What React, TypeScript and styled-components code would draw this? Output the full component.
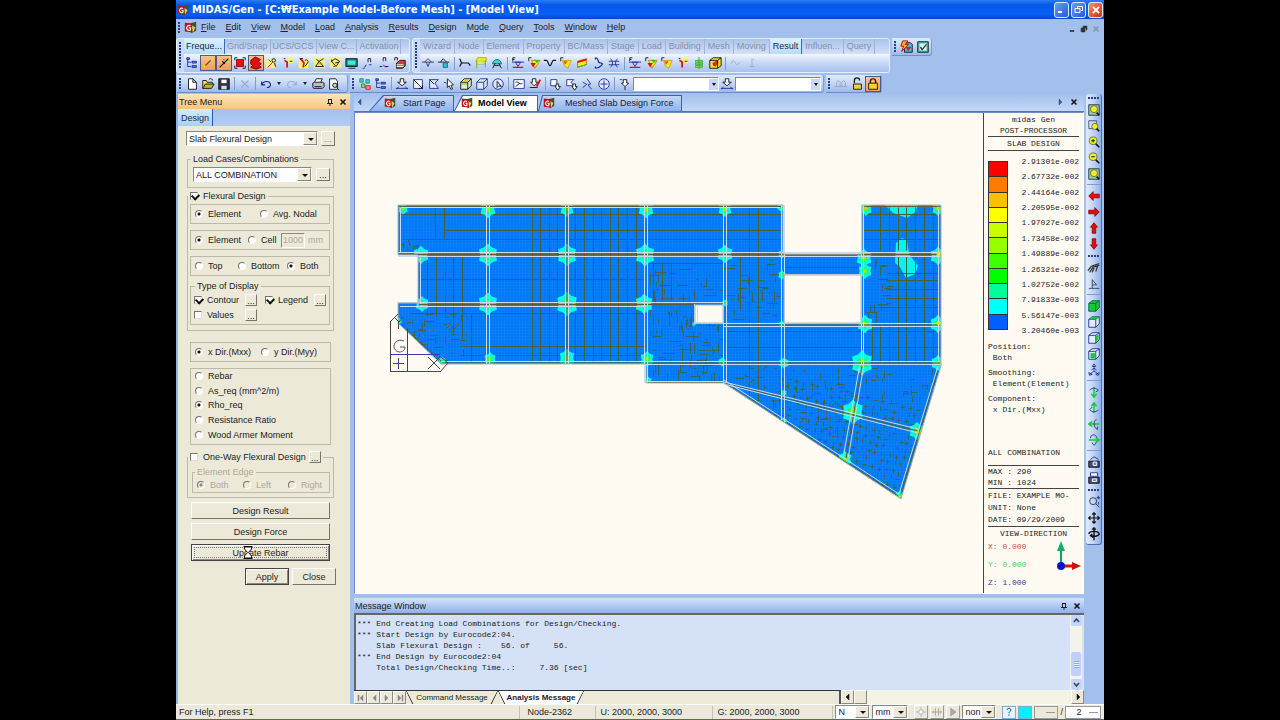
import React from "react";
import styled, { createGlobalStyle, css } from "styled-components";

const UI = `"Liberation Sans", Arial, sans-serif`;
const MONO = `"Liberation Mono", "Courier New", monospace`;

const GlobalStyle = createGlobalStyle`
  * { box-sizing: border-box; }
  body { margin: 0; background: #000; font-family: ${UI}; font-size: 9px; color: #222; }
  button, select, input { font: inherit; color: inherit; margin: 0; }
`;

/* ---------- icons ---------- */

type Stroke = [d: string, stroke: string, fill?: string, width?: number];

const K = "#111";
const B = "#1a2a9a";
const R = "#e01010";
const Y = "#f4f020";
const G = "#18c838";

const ICONS: Record<string, Stroke[]> = {
  tree: [["M3 3v9M3 7h4M3 12h4", B], ["M2 2h3v2h-3zM8 6h5v2h-5zM8 11h5v2h-5z", B, "#6a86d8"]],
  line: [["M3 13L13 3", "#5a4a10", undefined, 1.5], ["M3 13l2-2M11 5l2-2", Y, undefined, 2]],
  lineY: [["M3 13L13 3M6 6l3 3", K, undefined, 1.5], ["M7 5l2-2", R]],
  redBox: [["M2 2h3M11 2h3M2 14h3M11 14h3M2 2v3M14 2v3M2 11v3M14 11v3", K], ["M4 4h8v8H4z", "#a00", R]],
  redBlob: [["M2 5l5-4 6 3-2 2 3 3-2 2 2 2-6 2-6-2 2-2-2-2z", "#700", "#e01010"]],
  nodeY: [["M1 4h10v10H1z", "none", "#f6f27a"], ["M3 13l6-6M4 4l3 3", R], ["M10 3a2 2 0 1 1 0 4a2 2 0 1 1 0-4M11 8l1 4", K]],
  nodeR: [["M7 2h7v6H7z", "none", "#f6f27a"], ["M7 6v7M4 5l3 2", R, undefined, 2], ["M10 6h3M3 3h2", K]],
  nodeF: [["M2 4h11v10H2z", "none", "#f6f27a"], ["M4 3l4 5-1 5", R, undefined, 2], ["M9 5a2 2 0 1 1 3 3l-3 4M3 3h4", K]],
  mesh: [["M1 2h13v12H1z", "none", "#f2ee80"], ["M3 12l4-6 5 6zM4 4l3 2 5-3", K], ["M6 9h5", "#b08020"]],
  mesh2: [["M1 2h13v12H1z", "none", "#f2ee80"], ["M3 6l4-3 5 3-4 6zM7 8l4-1M3 4v3", K], ["M5 12h2", R]],
  screen: [["M1 3h13v9H1z", K, "#1c8070"], ["M3 5h9v5H3z", "none", "#40e8e0"], ["M4 14h8", K]],
  num: [["M8 7V3h3v4M4 13l2-3", K], ["M2 14h2M9 10h3", B]],
  num2: [["M7 6V2h3v4M3 12h3M9 12h4", K], ["M7 10l3 3", B]],
  book: [["M2 5V2h3v3", K], ["M4 8l4-3h6v6l-3 3H4z", K, "#d04030"], ["M4 10h8M4 12h8", "#fff"]],
  beam: [["M1 7h14M4 7l4-4 4 4M6 7l2 5 2-5", "#335"]],
  beam2: [["M1 7h13M4 7l3-4 4 4", K], ["M7 8h5v5H7z", "#178", "#30b8d8"]],
  ibeam: [["M2 3l2 5h8l2 3M2 12l2-4", K, undefined, 1.4]],
  frame: [["M4 2h10v4H2z", "#aa0", Y], ["M3 6v8M13 5v8M3 9h10", "#6a3", "none"], ["M4 6h7v3H4z", "none", "#d8f060"]],
  dome: [["M3 9a5 5 0 0 1 10 0z", "#167", "#40d8c0"], ["M3 14l3-6M13 14l-3-6M5 11h6", K]],
  fsup: [["M2 6V2h3M2 4h2", K], ["M1 7h14M5 7l3 5 3-5z", B], ["M2 13h12", R, undefined, 1.5]],
  fcont: [["M2 6V2h3", K], ["M5 5h10l-6 9-2-5z", "#d08000", Y], ["M8 4l6 1-3 3z", "none", G], ["M4 8l6 0-3 5z", "none", R]],
  curve: [["M1 5h3c2 0 2 6 4 6s2-6 4-6h3", K, undefined, 1.3]],
  fblob: [["M2 6V2h3", K], ["M4 5h10l-4 9-4-3z", "#d0a000", Y], ["M5 6h5l-3 4z", "none", "#f05020"]],
  slab: [["M3 6l10-3v7L3 13z", "#c60", Y], ["M3 6l10-3v2L3 8z", "none", R], ["M3 12l10-3v1L3 13z", "none", G]],
  hook: [["M5 2c5 0 1 6 6 6s-1 6-6 6M5 2v2M5 12v2", B, undefined, 1.4]],
  lattice: [["M4 3c3 3 3 7 0 10M12 3c-3 3-3 7 0 10M2 6h12M2 10h12", B]],
  coil: [["M4 5h8v2H4zM4 8h8v2H4zM4 11h8v2H4z", "#3a3", "#9be86a"], ["M8 1v14", "#3a3"]],
  cube3: [["M2 5l4-3h9v9l-4 3H2z", K, "#f4e030"], ["M5 8l5-3 2 2-3 5-3-1z", "none", "#d03010"], ["M2 5h9v9M11 5l4-3", K]],
  ghost: [["M2 9l3-4 4 5 4-3", "#9aa8c8"]],
  ghost2: [["M8 3v9M5 12h6M9 3l2 2", "#9aa8c8"]],
  blank: [["M4 2h5l4 4v8H4zM9 2v4h4", K, "#fff"]],
  open: [["M2 13V4h4l1 2h6v2", K, "#f2e070"], ["M2 13l3-5h10l-3 5z", K, "#c8b020"], ["M9 3c2-2 4-1 4 1", K]],
  save: [["M2 2h12v12H2z", K, "#334"], ["M5 3h6v4H5z", "none", "#fff"], ["M5 10h6v4H5z", "none", "#cde"]],
  cut: [["M4 4l8 8M12 4l-8 8", "#9aa6c4", undefined, 1.3]],
  undo: [["M3 5v4h4M3 9c2-5 9-5 10-1 1 3-2 4-4 4", B, undefined, 1.3]],
  redo: [["M13 5v4H9M13 9C11 4 4 4 3 8c-1 3 2 4 4 4", "#9fb0d8", undefined, 1.3]],
  print: [["M4 6l2-4h7l-2 4", K, "#fff"], ["M2 7l2-1h9l2 1v4l-2 2H3l-1-2z", K, "#b8bcc8"], ["M4 11h8", K]],
  preview: [["M3 2h7l2 3v9H3z", K, "#fff"], ["M9 7a2.500 2.500 0 1 1 0 5a2.500 2.500 0 1 1 0-5M11 12l3 3", K, "#9fe0e8"]],
  multi: [["M2 2h4v4H2zM9 3h4v4H9z", "#2a8a90", "#50c8c0"], ["M4 8h4v4H4z", "#2a8a40", "#70e070"], ["M9 10h5v4H9z", R, "#f09090"]],
  arrowDn: [["M6 2h4v4h3l-5 4-5-4h3z", K, "#fff"], ["M1 13h14M4 11l-2 3M12 11l2 3", B]],
  selWin: [["M3 3h10v10H3z", B, "#fff"], ["M3 3l10 10M13 9v4H9", K]],
  selPoly: [["M3 3h10l-4 4 4 6H3z", B, "#dfe8ff"], ["M3 3l5 5", K]],
  cursor: [["M5 2l7 7-3 .5 2 4-2 .5-2-4-2 2z", K, "#fff"], ["M1 6l3 1", B]],
  cube: [["M2 6l4-4h8v8l-4 4H2zM2 6h8v8M10 6l4-4", K, "#e8ecc0"], ["M3 8h6", G], ["M6 4h4", "#e8c020", undefined, 2]],
  cubeB: [["M2 6l4-4h8v8l-4 4H2zM2 6h8v8M10 6l4-4", B, "#dfe8ff"]],
  circleCur: [["M8 2a6 6 0 1 1 0 12a6 6 0 1 1 0-12", B, "#dfe8ff"], ["M7 5v7l2-2 3 1z", K, "#fff"]],
  prev: [["M2 3h12v10H2z", B, "#fff"], ["M4 6c3-2 5 4 8 1M4 11l5-4", K]],
  pen: [["M5 2h4v4h3l-5 4-4-4h2zM2 12h9", K, "#fff"], ["M14 3l-4 8", R, undefined, 2]],
  actWin: [["M2 3h7v7H2z", B, "#fff"], ["M8 8h3v3h2l-3 4-3-4h1z", K, "#fff"]],
  actPoly: [["M2 3h8l-3 3 3 4H2z", B, "#fff"], ["M9 8h3v3h2l-3 4-3-4h1z", K, "#fff"]],
  walk: [["M7 2l4 6-3 1 4 5M2 12l5-4M2 6l4 2", B]],
  target: [["M8 2a6 6 0 1 1 0 12a6 6 0 1 1 0-12M8 4v9M4 8h8", B, "#dfe8ff"]],
  pin: [["M6 3h4v4h2l-4 4-4-4h2zM8 11v4", K, "#fff"], ["M2 3h3", B]],
  lockOpen: [["M5 7V4a3 3 0 0 1 6 0", K, undefined, 1.4], ["M4 8h9v6H4z", K, "#f0d040"]],
  lock: [["M5 7V5a3 3 0 0 1 6 0v2", K, undefined, 1.4], ["M3 7h10v7H3z", K, "#f0d820"]],
  bridge: [["M1 11h14M3 11V6l2-2 2 2v5M9 11V6l2-2 2 2v5", "#98a4bc"]],
  flashDoc: [["M6 3h6l2 2v9H5z", K, "#48b8e0"], ["M7 8h6l-4 5z", "none", "#d02020"], ["M3 1h6l-3 4h4l-8 8 2-6H1z", "#a00", "#ffb020"]],
  check: [["M2 2h12v12H2z", K, "#38c8c0"], ["M4 4h8v8H4z", "none", "#c8fff4"], ["M5 8l2 3 5-6", "#702020", undefined, 1.6]],
  zoomFit: [["M2 2h12v12H2z", "#234", "#9cc8a0"], ["M8 3a4 4 0 1 1 0 8a4 4 0 1 1 0-8", "#665", Y], ["M11 11l3 3", K, undefined, 2]],
  zoomWin: [["M2 2h9v9H2z", "#456", "none"], ["M9 5a3.500 3.500 0 1 1 0 7a3.500 3.500 0 1 1 0-7", "#665", Y], ["M11 11l3 3", K, undefined, 2]],
  zoomIn: [["M7 2a4.500 4.500 0 1 1 0 9a4.500 4.500 0 1 1 0-9", "#665", Y], ["M5 6.500h4M7 4.500v4", "#0a5020", undefined, 1.4], ["M10 10l4 4", K, undefined, 2]],
  zoomOut: [["M7 2a4.500 4.500 0 1 1 0 9a4.500 4.500 0 1 1 0-9", "#665", Y], ["M5 6.500h4", "#0a5020", undefined, 1.4], ["M10 10l4 4", K, undefined, 2]],
  left: [["M2 8l5-5v3h7v4H7v3z", "#900", R]],
  right: [["M14 8L9 3v3H2v4h7v3z", "#900", R]],
  up: [["M8 2l4 5h-2v7H6V7H4z", "#900", R]],
  down: [["M8 14l4-5h-2V2H6v7H4z", "#900", R]],
  render: [["M1 11l4-5 9-3M3 13l4-6 7-2M6 13l2-5M10 12l2-6", "#333", undefined, 1.4]],
  persp: [["M2 13h12M6 13V3l5 6H6", "#345"]],
  boxFull: [["M2 5l4-3h8v8l-4 4H2z", "#064", G], ["M2 5h8v9M10 5l4-3", "#064"]],
  boxTop: [["M2 5l4-3h8v8l-4 4H2zM2 5h8v9M10 5l4-3", B, "#e4ecff"], ["M6 2h8l-4 3H2z", "none", G]],
  boxRight: [["M2 5l4-3h8v8l-4 4H2zM2 5h8v9M10 5l4-3", B, "#e4ecff"], ["M10 6l3-2v6l-3 3z", "none", G]],
  boxFront: [["M2 5l4-3h8v8l-4 4H2zM2 5h8v9M10 5l4-3", B, "#e4ecff"], ["M4 7h6v6H4z", "none", G]],
  iso: [["M8 3v6l-5 4M8 9l5 4M6 4l2-3 2 3zM2 11l1 3 3-1zM14 11l-1 3-3-1zM5 8l3-2 3 2", B, "#dfe8ff"]],
  rotD: [["M8 2v11M5 10l3 4 3-4", G, undefined, 1.6], ["M3 6c2-3 8-3 10 0l-3 2", B]],
  rotU: [["M8 14V3M5 6l3-4 3 4", G, undefined, 1.6], ["M3 10c2 3 8 3 10 0M3 10l3-3", B]],
  rotL: [["M14 8H3M6 5L2 8l4 3", G, undefined, 1.6], ["M11 3c-4 0-4 10 1 11M12 11v3", B]],
  rotR: [["M2 8h11M10 5l4 3-4 3", G, undefined, 1.6], ["M4 6c0-5 6-5 7-1M6 11c1 4 4 3 4 0", B]],
  cam: [["M2 7h12v7H2z", K, "#405080"], ["M7 8h4v4H7z", "#fff", "#88a"], ["M4 5l4-3 5 3", B]],
  cam2: [["M2 7h12v7H2z", K, "#405080"], ["M4 2h8v4H4z", B, "#fff"], ["M6 9h5v3H6z", "#fff", "#88a"]],
  dynZoom: [["M7 3a4 4 0 1 1 0 8a4 4 0 1 1 0-8M10 10l4 4", "#234"], ["M11 3h4M13 1v4M13 8v3", B]],
  move: [["M8 2v12M2 8h12M6 4l2-2 2 2M6 12l2 2 2-2M4 6L2 8l2 2M12 6l2 2-2 2", K, undefined, 1.4]],
  spin: [["M8 1v14M6 3l2-2 2 2", K, undefined, 1.6], ["M2 8c1-4 11-4 12 0-1 3-7 3-9 2M6 8l-2 2 3 2", K, undefined, 1.6]],
  gear: [["M8 5a3 3 0 1 1 0 6a3 3 0 1 1 0-6M8 2v2M8 12v2M2 8h2M12 8h2", "#999", "#fff"]],
  shift: [["M2 8h12M4 6L2 8l2 2M12 6l2 2-2 2M6 3v10M10 3v10", "#999"]],
  play: [["M5 3l7 5-7 5z", "#999", "#aaa"]],
  help: [["M5 5c0-4 6-4 6 0 0 2-3 2-3 5M8 12v2", "#23a", undefined, 1.6]],
};

const Glyph = styled.svg`
  display: block;
  flex: none;
`;

const Icon = ({ name, size = 14 }: { name: string; size?: number }) => (
  <Glyph width={size} height={size} viewBox="0 0 16 16" aria-hidden="true">
    {ICONS[name].map(([d, stroke, fill, w], i) => (
      <path key={i} d={d} stroke={stroke} fill={fill ?? "none"} strokeWidth={w ?? 1} />
    ))}
  </Glyph>
);

const AppIcon = ({ size = 13 }: { size?: number }) => (
  <Glyph width={size} height={size} viewBox="0 0 16 16" aria-hidden="true">
    <path d="M7 3l8-2v11l-6 3z" fill="#46502a" />
    <path d="M9 5l5 3-3 6z" fill="#d8d070" />
    <path d="M1 2l9 1v11l-9-1z" fill="#b81414" />
    <path d="M8 6a3 3 0 1 0 0 5V8.500H6" fill="none" stroke="#fff" strokeWidth="1.500" />
  </Glyph>
);

/* ---------- window frame ---------- */

const Desktop = styled.div`
  min-height: 100vh;
  padding: 0 176px;
  display: flex;
`;

const Window = styled.div`
  flex: 1;
  min-width: 0;
  display: flex;
  flex-direction: column;
  background: #a3c0ec;
  overflow: hidden;
`;

const TitleBar = styled.header`
  height: 19px;
  flex: none;
  display: flex;
  align-items: center;
  gap: 3px;
  padding: 0 1px 0 1px;
  background: linear-gradient(#2b7df5 0, #0558e8 25%, #0560f4 75%, #0448c8 100%);
`;

const Title = styled.h1`
  flex: 1;
  margin: 0;
  color: #fff;
  font-family: "DejaVu Sans Condensed", "DejaVu Sans", sans-serif;
  font-size: 11px;
  line-height: 18px;
  font-weight: bold;
  white-space: nowrap;
`;

const CaptionButtons = styled.div`
  display: flex;
  gap: 2px;
`;

const CaptionButton = styled.button<{ $close?: boolean }>`
  width: 15px;
  height: 16px;
  padding: 0;
  display: grid;
  place-items: center;
  border: 1px solid #dfe8ff;
  border-radius: 3px;
  background: ${(p) => (p.$close ? "linear-gradient(135deg, #f09070, #c83010)" : "linear-gradient(135deg, #6f9cf4, #2458d0)")};
`;

const MenuBar = styled.nav`
  height: 18px;
  flex: none;
  display: flex;
  align-items: center;
  padding: 0 4px 2px 0;
  gap: 1px;
`;

const MenuItems = styled.div`
  flex: 1;
  display: flex;
  gap: 10px;
  padding-left: 3px;
`;

const MenuItem = styled.a`
  color: #222;
  text-decoration: none;
  line-height: 14px;
`;

const Mnemonic = styled.u`
  text-underline-offset: 1px;
`;

const MdiButtons = styled.div`
  display: flex;
  gap: 4px;
  padding-top: 4px;
`;

const PlainButton = styled.button`
  display: grid;
  place-items: center;
  padding: 0;
  border: 0;
  background: none;
`;

const Grip = styled.span<{ $h?: number; $across?: boolean }>`
  flex: none;
  ${(p) =>
    p.$across
      ? css`
          width: 11px;
          height: 2px;
          margin: 3px auto;
          background: repeating-linear-gradient(90deg, #26408c 0 2px, transparent 2px 3px);
        `
      : css`
          width: 2px;
          height: ${p.$h ?? 12}px;
          margin: 0 3px 0 2px;
          background: repeating-linear-gradient(#26408c 0 2px, transparent 2px 3px);
        `}
`;

const RibbonRow = styled.div`
  display: flex;
  align-items: flex-start;
  flex: none;
  gap: 2px;
  padding: 1px 0 0 0;
  height: 38px;
`;

const bar = css`
  background: linear-gradient(#dfe9fb, #c4d6f6 50%, #9cb8ea);
  border-bottom: 1px solid #6d8dc8;
  border-right: 1px solid #7f9cd0;
  border-radius: 0 3px 3px 0;
`;

const Ribbon = styled.section<{ $w: number }>`
  flex: 0 1 ${(p) => p.$w}px;
  height: 35px;
  display: flex;
  align-items: center;
  background: #c9daf7;
  border: 1px solid #e6eefc;
  border-radius: 3px;
  overflow: hidden;
`;

const RibbonBody = styled.div`
  flex: 1;
  min-width: 0;
`;

const RibbonTabs = styled.div<{ $pad: number }>`
  display: flex;
  height: 15px;
  background: linear-gradient(#a9c2ee, #d4e1f8);
  & > button { padding: 0 ${(p) => p.$pad}px; }
`;

const RibbonTab = styled.button<{ $on?: boolean }>`
  height: 15px;
  border: 0;
  border-right: 1px solid #9fb2d8;
  background: none;
  color: #8490ab;
  white-space: nowrap;
  line-height: 13px;
  ${(p) =>
    p.$on &&
    css`
      background: linear-gradient(#d8f0fc, #b8dcf8);
      border-right-color: #3a68b8;
      color: #1c2c50;
    `}
`;

const IconRow = styled.div`
  display: flex;
  align-items: center;
  height: 18px;
  background: linear-gradient(#f2f6fe, #c0d3f5 60%, #a8c2f0);
`;

const ToolButton = styled.button<{ $on?: boolean }>`
  width: 16px;
  height: 16px;
  flex: none;
  display: grid;
  place-items: center;
  padding: 0;
  border: 1px solid ${(p) => (p.$on ? "#4a5a90" : "transparent")};
  background: ${(p) => (p.$on ? "linear-gradient(#fbc48c, #f49c54)" : "none")};
`;

const Divider = styled.span<{ $across?: boolean }>`
  flex: none;
  background: #7f9bd0;
  ${(p) => (p.$across ? "width: 14px; height: 1px; margin: 2px auto 3px;" : "width: 1px; height: 13px; margin: 0 2px;")}
`;

const ToolRow = styled.div`
  display: flex;
  flex: none;
  gap: 2px;
  padding-left: 1px;
  height: 19px;
`;

const ToolStrip = styled.section<{ $w?: number }>`
  display: flex;
  align-items: center;
  height: 18px;
  ${(p) => p.$w && `width: ${p.$w}px;`}
  ${bar}
`;

const Caret = styled.span`
  flex: none;
  width: 0;
  height: 0;
  margin: 0 3px;
  border: 2px solid transparent;
  border-top: 3px solid #223;
  border-bottom: 0;
`;

/* ---------- form controls ---------- */

const SelectFrame = styled.span<{ $w: number; $h?: number; $flat?: boolean }>`
  position: relative;
  display: block;
  flex: none;
  width: ${(p) => p.$w}px;
  height: ${(p) => p.$h ?? 15}px;
  &::after {
    content: "";
    position: absolute;
    z-index: 1;
    right: 4px;
    top: calc(50% - 1px);
    border: 3px solid transparent;
    border-top: 3px solid #111;
    border-bottom: 0;
    pointer-events: none;
    ${(p) => p.$flat && "border-width: 3px 2px 0; right: 3px;"}
  }
  &::before {
    content: "";
    position: absolute;
    right: 1px;
    top: 1px;
    bottom: 1px;
    width: 12px;
    pointer-events: none;
    background: ${(p) => (p.$flat ? "#c8d8f6" : "#ece9d8")};
    border: 1px solid ${(p) => (p.$flat ? "#c8d8f6" : "#8a887c")};
    border-left-color: #fff;
    border-top-color: #fff;
    ${(p) => p.$flat && "width: 8px;"}
  }
`;

const SelectBox = styled.select`
  appearance: none;
  width: 100%;
  height: 100%;
  padding: 0 12px 0 2px;
  border: 1px solid #8a887c;
  border-right-color: #fff;
  border-bottom-color: #fff;
  border-radius: 0;
  background: #fff;
  color: #222;
`;

const Select = (p: { label: string; value: string; w: number; h?: number; flat?: boolean }) => (
  <SelectFrame $w={p.w} $h={p.h} $flat={p.flat}>
    <SelectBox aria-label={p.label}>
      <option>{p.value}</option>
    </SelectBox>
  </SelectFrame>
);

const Push = styled.button<{ $w?: number; $h?: number; $strong?: boolean }>`
  position: relative;
  width: ${(p) => (p.$w ? `${p.$w}px` : "100%")};
  height: ${(p) => p.$h ?? 17}px;
  flex: none;
  padding: 0;
  border: 1px solid #fff;
  border-right-color: #77756a;
  border-bottom-color: #77756a;
  background: #ece9d8;
  line-height: 12px;
  ${(p) =>
    p.$strong &&
    css`
      border-color: #444;
      box-shadow: inset 1px 1px #fff, inset -1px -1px #8a887c;
    `}
  &:disabled { color: #8a887c; }
`;

const Focus = styled.span`
  position: absolute;
  inset: 2px;
  border: 1px dotted #777;
`;

const Hourglass = styled.svg`
  position: absolute;
  left: 50px;
  top: 0;
`;

const Choice = styled.label<{ $w?: number; $off?: boolean }>`
  display: flex;
  align-items: center;
  gap: 5px;
  flex: none;
  ${(p) => p.$w && `width: ${p.$w}px;`}
  line-height: 12px;
  white-space: nowrap;
  color: ${(p) => (p.$off ? "#aca899" : "#222")};
`;

const Radio = styled.input`
  appearance: none;
  width: 8px;
  height: 8px;
  flex: none;
  border: 1px solid #77756a;
  border-right-color: #fff;
  border-bottom-color: #fff;
  border-radius: 50%;
  background: #fff;
  &:checked { background: radial-gradient(circle, #111 0 1px, #fff 2px); }
  &:disabled { background: #ece9d8; }
  &:disabled:checked { background: radial-gradient(circle, #888 0 1px, #ece9d8 2px); }
`;

const Tick = styled.input`
  appearance: none;
  width: 8px;
  height: 8px;
  flex: none;
  border: 1px solid #77756a;
  border-right-color: #ddd;
  border-bottom-color: #ddd;
  background: #fff;
  position: relative;
  &:checked::after {
    content: "";
    position: absolute;
    left: 1px;
    top: 0;
    width: 5px;
    height: 4px;
    border: solid #111;
    border-width: 0 0 2px 2px;
    transform: rotate(-45deg);
  }
`;

const Opt = (p: { name: string; label: string; on?: boolean; w?: number; off?: boolean }) => (
  <Choice $w={p.w} $off={p.off}>
    <Radio type="radio" name={p.name} defaultChecked={p.on} disabled={p.off} />
    {p.label}
  </Choice>
);

const Check = (p: { label: string; on?: boolean; w?: number }) => (
  <Choice $w={p.w}>
    <Tick type="checkbox" defaultChecked={p.on} />
    {p.label}
  </Choice>
);

/* ---------- left panel ---------- */

const Main = styled.main`
  flex: 1;
  min-height: 0;
  display: flex;
`;

const TreeMenu = styled.aside`
  width: 174px;
  flex: none;
  display: flex;
  flex-direction: column;
  border-left: 2px solid #8fb0e8;
`;

const PanelHead = styled.div`
  height: 15px;
  flex: none;
  display: flex;
  align-items: center;
  gap: 5px;
  padding: 0 3px 0 1px;
  background: linear-gradient(#fde4b8, #f5c67c);
  color: #222;
`;

const HeadTitle = styled.span`
  flex: 1;
`;

const DesignTabRow = styled.div`
  height: 17px;
  flex: none;
  background: linear-gradient(#a3c0ec, #b4ccf2);
`;

const DesignTab = styled.button`
  height: 17px;
  width: 35px;
  padding: 0;
  border: 0;
  border-right: 1px solid #2a5ab0;
  background: linear-gradient(#d4ecfc, #a8d0f4);
  color: #1c2c50;
`;

const PanelBody = styled.form`
  flex: 1;
  padding: 5px 16px 0 8px;
  background: #ece9d8;
  display: flex;
  flex-direction: column;
`;

const TopRow = styled.div`
  display: flex;
  gap: 3px;
  margin-bottom: 7px;
  margin-right: -2px;
`;

const Group = styled.fieldset<{ $pad?: string; $mt?: number; $off?: boolean }>`
  margin: ${(p) => p.$mt ?? 0}px 0 0 1px;
  padding: ${(p) => p.$pad ?? "2px 3px 5px"};
  min-width: 0;
  border: 1px solid #bcb9aa;
  color: ${(p) => (p.$off ? "#aca899" : "inherit")};
`;

const GroupTitle = styled.legend<{ $h?: number; $ml?: number }>`
  display: flex;
  align-items: center;
  gap: 3px;
  height: ${(p) => p.$h ?? 12}px;
  line-height: ${(p) => p.$h ?? 12}px;
  margin-left: ${(p) => p.$ml ?? 0}px;
  padding: 0 2px;
`;

const Stack = styled.div`
  display: flex;
  flex-direction: column;
  gap: 6px;
  & > * { margin-left: -1px; }
  & > fieldset { margin-top: -1px; }
`;

const Box = styled.div`
  display: flex;
  align-items: center;
  height: 20px;
  padding-left: 4px;
  border: 1px solid #bcb9aa;
`;

const OptionList = styled.div`
  display: grid;
  grid-auto-rows: 1fr;
  align-items: center;
  height: 77px;
  margin: 6px 3px 0 4px;
  padding: 0 0 2px 4px;
  border: 1px solid #bcb9aa;
`;

const DirBox = styled(Box)`
  margin: 11px 3px 0 4px;
`;

const Line = styled.div`
  display: flex;
  align-items: center;
  height: 15px;
`;

const CellSize = styled.input`
  width: 24px;
  height: 15px;
  margin: 0 3px 0 0;
  padding: 0 1px;
  border: 1px solid #8a887c;
  border-right-color: #fff;
  border-bottom-color: #fff;
  background: #ece9d8;
  color: #aca899;
`;

const Actions = styled.div`
  display: flex;
  flex-direction: column;
  gap: 4px;
  margin: 4px 4px 7px 5px;
`;

const Confirm = styled.div`
  display: flex;
  justify-content: flex-end;
  gap: 3px;
  margin-right: -2px;
`;

/* ---------- documents ---------- */

const Center = styled.div`
  flex: 1;
  min-width: 0;
  display: flex;
  flex-direction: column;
  margin-left: 4px;
`;

const DocTabs = styled.div`
  height: 18px;
  flex: none;
  display: flex;
  align-items: flex-end;
  border-bottom: 1px solid #4f74b8;
  background: linear-gradient(#a3c0ec, #c4d7f6);
`;

const DocControls = styled.div<{ $end?: boolean }>`
  display: flex;
  align-items: center;
  gap: 5px;
  height: 17px;
  padding: ${(p) => (p.$end ? "0 6px 1px 0" : "0 5px 1px 2px")};
`;

const DocTab = styled.button<{ $on?: boolean; $w: number; $pad: number; $cut: number; $gap?: number }>`
  position: relative;
  width: ${(p) => p.$w}px;
  height: 16px;
  padding: 0 0 1px ${(p) => p.$pad}px;
  display: flex;
  align-items: center;
  gap: ${(p) => p.$gap ?? 7}px;
  border: 0;
  white-space: nowrap;
  font-weight: ${(p) => (p.$on ? "bold" : "normal")};
  color: ${(p) => (p.$on ? "#000" : "#223")};
  background: #3c62ac;
  clip-path: polygon(${(p) => p.$cut}px 0, 100% 0, 100% 100%, 0 100%);
  &::before {
    content: "";
    position: absolute;
    inset: 1px 1px 0 1px;
    background: ${(p) => (p.$on ? "#fff" : "linear-gradient(#c4d8f8, #8fb4ee)")};
    clip-path: polygon(${(p) => p.$cut}px 0, 100% 0, 100% 100%, 0 100%);
  }
  & > * { position: relative; }
`;

const Spring = styled.span`
  flex: 1;
`;

const View = styled.section`
  flex: 1;
  min-height: 0;
  display: flex;
  border: 1px solid #6f8cc0;
  border-right-color: #fff;
  border-bottom-color: #fff;
  background: #fffbf2;
`;

const ModelArea = styled.div`
  flex: 1;
  min-width: 0;
`;

const ModelSvg = styled.svg`
  display: block;
  width: 100%;
  height: 100%;
`;

const LegendPane = styled.div`
  width: 100px;
  flex: none;
  padding: 1px 4px 0 4px;
  border-left: 1px solid #444;
  font-family: ${MONO};
  font-size: 8px;
  line-height: 11px;
  color: #222;
  white-space: pre;
`;

const LegendText = styled.div<{ $center?: boolean; $rule?: boolean; $mt?: number; $pb?: number; $h?: number; $color?: string }>`
  text-align: ${(p) => (p.$center ? "center" : "left")};
  margin-top: ${(p) => p.$mt ?? 0}px;
  padding-bottom: ${(p) => p.$pb ?? 0}px;
  line-height: ${(p) => p.$h ?? 11}px;
  color: ${(p) => p.$color ?? "#222"};
  ${(p) => p.$rule && "border-bottom: 1px solid #444;"}
`;

const Scale = styled.div`
  display: flex;
  justify-content: space-between;
  margin-top: 5px;
`;

const Swatches = styled.div`
  width: 20px;
  height: 169px;
  margin-top: 5px;
  display: flex;
  flex-direction: column;
  border: 1px solid #333;
  border-bottom: 0;
`;

const Swatch = styled.span<{ $c: string }>`
  flex: 1;
  background: ${(p) => p.$c};
  border-bottom: 1px solid #333;
`;

const Values = styled.div`
  height: 180px;
  display: flex;
  flex-direction: column;
  justify-content: space-between;
`;

const Directions = styled.div`
  display: flex;
  justify-content: space-between;
  margin-right: -3px;
`;

/* ---------- message window ---------- */

const MessageHead = styled(PanelHead)`
  margin-top: 4px;
  background: linear-gradient(#d6e4fb, #8fb0ea);
`;

const MessageBody = styled.div`
  height: 77px;
  flex: none;
  display: flex;
  border-top: 2px solid #666;
  border-left: 2px solid #666;
  background: #d4e1f7;
`;

const Log = styled.pre`
  flex: 1;
  margin: 0;
  padding: 3px 0 0 1px;
  font-family: ${MONO};
  font-size: 8px;
  line-height: 11px;
  color: #222;
`;

const VScroll = styled.div`
  width: 12px;
  display: flex;
  flex-direction: column;
  align-items: center;
  margin-right: 2px;
  background: #f4f3ea;
`;

const ScrollCap = styled.button`
  width: 11px;
  height: 11px;
  padding: 0;
  display: grid;
  place-items: center;
  border: 0;
  border-radius: 2px;
  background: #c3d5fd;
`;

const ScrollThumb = styled.span`
  width: 10px;
  height: 24px;
  margin-top: auto;
  margin-bottom: 3px;
  border-radius: 2px;
  display: grid;
  place-items: center;
  background: #c0d0fa;
`;

const Ridges = styled.span`
  width: 5px;
  height: 7px;
  background: repeating-linear-gradient(#8ea8e0 0 1px, #eef 1px 2px);
`;

const MessageTabs = styled.div`
  height: 14px;
  flex: none;
  display: flex;
  align-items: stretch;
  background: #f4f3e6;
`;

const TabTray = styled.div`
  width: 487px;
  display: flex;
  border-top: 1px solid #333;
  border-right: 2px solid #555;
  background: #ece9d8;
`;

const NavButton = styled.button`
  width: 13px;
  padding: 0;
  display: grid;
  place-items: center;
  border: 1px solid #fff;
  border-right-color: #888;
  border-bottom-color: #888;
  background: #ece9d8;
`;

const MsgTab = styled.button<{ $on?: boolean; $w: number }>`
  position: relative;
  width: ${(p) => p.$w}px;
  padding: 0;
  border: 0;
  background: ${(p) => (p.$on ? "#fff" : "#ece9d8")};
  clip-path: polygon(0 0, 100% 0, calc(100% - 6px) 100%, 6px 100%);
  font-size: 8px;
  line-height: 10px;
  font-weight: ${(p) => (p.$on ? "bold" : "normal")};
  &::before, &::after {
    content: "";
    position: absolute;
    top: -1px;
    width: 1px;
    height: 15px;
    background: #333;
  }
  &::before { left: 3px; transform: rotate(-27deg); }
  &::after { right: 3px; transform: rotate(27deg); }
`;

const StatusBar = styled.footer`
  height: 17px;
  flex: none;
  display: flex;
  align-items: center;
  padding: 0 3px;
  gap: 2px;
  border-top: 1px solid #fff;
  border-bottom: 2px solid #3468c8;
  background: #ece9d8;
`;

const StatusCell = styled.span<{ $w?: number; $pad?: number }>`
  ${(p) => (p.$w ? `width: ${p.$w}px; flex: none;` : "flex: 1;")}
  padding-left: ${(p) => p.$pad ?? 0}px;
  line-height: 13px;
  white-space: nowrap;
  border-right: 1px solid #c4c1b2;
`;

const StatusTools = styled.div`
  display: flex;
  gap: 2px;
  padding-left: 4px;
`;

const StatusButton = styled(Push)<{ $bg?: string }>`
  display: grid;
  place-items: center;
  border-color: ${(p) => (p.$bg ? "#8ac" : "#fff #999 #999 #fff")};
  background: ${(p) => p.$bg ?? "#ece9d8"};
`;

const Spin = styled.input<{ $on?: boolean }>`
  width: ${(p) => (p.$on ? 36 : 24)}px;
  height: 13px;
  flex: none;
  padding: 0 12px 0 4px;
  border: 1px solid #999;
  text-align: center;
  background: linear-gradient(#999, #999) right 2px center / 9px 1px no-repeat, ${(p) => (p.$on ? "#fff" : "#ece9d8")};
`;

/* ---------- right tool column ---------- */

const Side = styled.aside`
  width: 20px;
  flex: none;
  padding: 0 2px;
`;

const SideBar = styled.div`
  display: flex;
  flex-direction: column;
  align-items: center;
  padding-bottom: 2px;
  border-radius: 3px;
  border-right: 1px solid #4a70b8;
  border-bottom: 1px solid #4a70b8;
  background: linear-gradient(90deg, #e2ebfc, #c0d3f5 50%, #8fb0e8);
`;

/* ---------- model drawing ---------- */

const SLAB =
  "M398 205H783V254H862V205H941V366L901 499L724 383H646V364H441L398 323V303H418V255H398ZM784 275V323H861V275ZM695 305V323H723V305Z";

const rand = (seed: number) => {
  let s = seed;
  return () => {
    s = (s * 16807) % 2147483647;
    return s / 2147483647;
  };
};

const scatter = (x0: number, y0: number, x1: number, y1: number, n: number, len: number, seed: number, slant = false) => {
  const r = rand(seed);
  let d = "";
  for (let i = 0; i < n; i++) {
    const x = Math.round(x0 + r() * (x1 - x0));
    const y = Math.round(y0 + r() * (y1 - y0));
    const l = Math.round(2 + r() * len);
    const k = r();
    d += `M${x} ${y}`;
    d += k < 0.45 ? `h${l}` : k < 0.85 || !slant ? `v${l}` : `l${l} ${-l}`;
  }
  return d;
};

/* small crosses on a tilted lattice */
const crosses = (x0: number, y0: number, x1: number, y1: number, step: number, seed: number) => {
  const r = rand(seed);
  let d = "";
  for (let y = y0; y < y1; y += step)
    for (let x = x0; x < x1; x += step) {
      const px = Math.round(x - (y - y0) * 0.28 + r() * 3);
      const py = Math.round(y + (x - x0) * 0.24 + r() * 3);
      if (r() < 0.7) d += `M${px} ${py}h4`;
      if (r() < 0.7) d += `M${px + 2} ${py - 2}v4`;
    }
  return d;
};

const cols = (xs: number[], y0: number, y1: number) => xs.map((x) => `M${x} ${y0}V${y1}`).join("");
const rows = (ys: number[], x0: number, x1: number) => ys.map((y) => `M${x0} ${y}H${x1}`).join("");

const MESH =
  rows([214, 230, 239], 445, 783) +
  rows([214], 400, 445) +
  rows([239], 403, 445) +
  rows([279], 420, 645) +
  rows([313], 410, 645) +
  rows([346, 355], 460, 645) +
  cols([532, 540, 549, 557, 575, 584, 593, 601, 610, 618, 627, 636], 207, 362) +
  cols([435, 444], 207, 238) +
  cols([427, 436, 445], 256, 316) +
  cols([453, 462], 256, 335) +
  cols([471], 313, 362) +
  cols([749, 758], 207, 400) +
  cols([740], 256, 310) +
  cols([653, 662, 671], 262, 300) +
  rows([263], 650, 722) +
  rows([267], 785, 860) +
  rows([331, 347], 727, 940) +
  rows([214, 230, 239], 864, 940) +
  cols([880, 889, 898, 906, 915, 924, 933], 207, 250) +
  rows([273, 280, 289, 298], 886, 938) +
  rows([307], 864, 938) +
  cols([898, 906, 915, 924, 933], 256, 362) +
  cols([872, 880, 889], 326, 362);

const SCATTER =
  scatter(400, 238, 420, 252, 8, 6, 11) +
  scatter(402, 312, 466, 360, 45, 7, 5, true) +
  scatter(650, 264, 722, 300, 30, 12, 17) +
  scatter(650, 308, 720, 378, 90, 10, 23) +
  scatter(730, 260, 778, 320, 32, 10, 31) +
  scatter(732, 366, 856, 430, 80, 6, 41, true) +
  scatter(866, 366, 935, 400, 26, 6, 71) +
  crosses(780, 376, 950, 500, 7, 53) +
  scatter(866, 258, 888, 318, 20, 10, 61);

const BEAMS =
  "M401 207.500H780M398 252.500H940M398 256.500H940M397 302.500H724M400 306.500H646M694 323.500H940M724 326.500H940M441 361.500H940M646 364.500H942M646 381.500H724" +
  cols([486.5, 489.5, 565.5, 568.5], 205, 364) +
  cols([644.5, 647.5], 205, 383) +
  cols([723.5, 726.5], 205, 383) +
  "M781.500 205V420M784.500 205V423" +
  "M861.500 205V364M863.500 205V364M938.500 208V362M724 382L918 429M724 384L918 433M860 364L843 458M864 364L848 459M938 366L899 494M724 380L899 494M400.500 208V252M420.500 256V304M694.500 304V324M697.500 306V322M784 274.500H862";

const RIBS =
  "M399 206.500H782M864 206.500H940M399 254.500H940M419 304.500H694M724 325H940M442 363H940M648 382.500H722M567 207V362M724 383L918 431M862 366L846 458M937 372L901 494M726 384L898 496M402 325L441 361M694 306V322";

const NODES: [number, number, number][] = [
  [403, 209, 5], [488, 209, 8], [567, 209, 7], [646, 209, 8], [725, 209, 7], [781, 207, 4], [866, 209, 6], [938, 209, 6],
  [421, 255, 8], [488, 255, 10], [567, 255, 10], [645, 255, 10], [725, 254, 8], [782, 254, 4], [864, 258, 8], [865, 271, 7], [938, 256, 8],
  [422, 304, 7], [488, 304, 10], [567, 304, 11], [644, 304, 9], [725, 303, 3], [782, 275, 4], [782, 324, 3], [865, 324, 8], [938, 324, 8],
  [490, 359, 6], [567, 358, 8], [647, 359, 7], [722, 362, 4], [784, 363, 5], [862, 363, 11], [938, 363, 7],
  [784, 393, 3], [784, 421, 3], [853, 412, 11], [917, 431, 8], [845, 459, 7], [900, 496, 5], [648, 381, 4], [694, 324, 2], [442, 361, 4], [399, 321, 3],
];

const star = (x: number, y: number, r: number, k: number) =>
  Array.from({ length: 12 }, (_, i) => {
    const a = (i / 12) * Math.PI * 2 + 0.52;
    const q = i % 2 ? r * k : r;
    return `${(x + Math.cos(a) * q * 0.9).toFixed(1)},${(y + Math.sin(a) * q).toFixed(1)}`;
  }).join(" ");

const Model = () => (
  <ModelSvg viewBox="355 113 628 480" role="img" aria-label="Slab design contour, reinforcement ratio in x direction">
    <defs>
      <clipPath id="slab">
        <path d={SLAB} clipRule="evenodd" />
      </clipPath>
      <pattern id="grid" width="3" height="3" patternUnits="userSpaceOnUse">
        <path d="M0 .5H3M.5 0V3" stroke="#1c8cf4" strokeWidth="1" />
      </pattern>
    </defs>
    <g clipPath="url(#slab)">
      <path d={SLAB} fill="#0078f8" fillRule="evenodd" />
      <path d={SLAB} fill="url(#grid)" opacity=".4" fillRule="evenodd" />
      <path d="M885 205l8 8 14 5 8-6 3-7z" fill="#00f8e8" />
      <path d="M896 243l6-5 5 2 2 14 9 12-3 8-9 4-6-11-5-4z" fill="#00f8e8" />
      <g transform="translate(.5 .5)" fill="none" stroke="#42613e">
        <path d={MESH} />
        <path d={SCATTER} opacity=".9" />
      </g>
      {NODES.map(([x, y, r], i) => (
        <g key={i}>
          <polygon points={star(x, y, r * 1.15, 0.75)} fill="#08fce4" />
          <polygon points={star(x, y, r * 0.65, 0.6)} fill="#20f070" />
          {r > 4 && <polygon points={star(x, y, r * 0.4, 0.6)} fill="#90f010" />}
        </g>
      ))}
    </g>
    <path d={RIBS} stroke="#57603c" strokeWidth="1" fill="none" />
    <path d={BEAMS} stroke="#c4dcf4" strokeWidth="1" fill="none" />
    <path d={SLAB} stroke="#b4b4a8" strokeWidth="1" fill="none" />
    <g fill="none" stroke="#444">
      <path d="M390.500 322V372M407.500 329V354M390 322l8-8M407.500 354V372M428 357l12 12M428 369l12-12M441 357l7 6-8 9M394 317l5 5 4-5M398.500 322v7" />
      <path d="M390 354.500H440M390 371.500H440M393 363.500h11M398.500 358v11" stroke="#3a3aa8" />
      <path d="M404 341c-10-4-14 9-5 11 4 0 6-2 6-5h-5" stroke="#556" />
    </g>
    <circle cx="938.500" cy="254" r="2" fill="#f8e020" />
    <circle cx="938.500" cy="323" r="2" fill="#f8e020" />
    <circle cx="865.500" cy="208" r="1.500" fill="#f8c020" />
    <circle cx="938" cy="208" r="1.500" fill="#f8c020" />
    <circle cx="918" cy="432" r="1.500" fill="#f8c020" />
  </ModelSvg>
);

const X = ({ color = "#111", size = 8 }: { color?: string; size?: number }) => (
  <svg width={size} height={size} viewBox="0 0 8 8" aria-hidden="true">
    <path d="M1.500 1.500l5 5M6.500 1.500l-5 5" stroke={color} strokeWidth="1.500" />
  </svg>
);

const Pin = () => (
  <svg width="8" height="8" viewBox="0 0 8 8" aria-hidden="true">
    <path d="M2.500 1v4M5.500 1v4M2 1.500h4M1 5.500h6M4 5v3" stroke="#222" />
  </svg>
);

const Tri = ({ d, color = "#888" }: { d: string; color?: string }) => (
  <svg width="8" height="8" viewBox="0 0 8 8" aria-hidden="true">
    <path d={d} fill={color} stroke={color} strokeWidth=".5" />
  </svg>
);

const Tools = ({ list }: { list: string }) => (
  <>
    {list.split(" ").map((n, i) =>
      n === "|" ? (
        <Divider key={i} />
      ) : n === "v" ? (
        <Caret key={i} />
      ) : (
        <ToolButton key={i} type="button" aria-label={n.replace("*", "")} $on={n.startsWith("*")}>
          <Icon name={n.replace("*", "")} />
        </ToolButton>
      )
    )}
  </>
);

const SIDE =
  "= zoomFit zoomWin zoomIn zoomOut zoomFit | left right up down = render persp | boxFull boxTop boxRight boxFront iso | rotD rotU rotL rotR | cam cam2 = dynZoom move spin";

const MENUS = ["_File", "_Edit", "_View", "_Model", "_Load", "_Analysis", "_Results", "_Design", "M_ode", "_Query", "_Tools", "_Window", "_Help"];
const COLORS = ["#ff0000", "#ff7a00", "#ffc000", "#ffff00", "#c8ff00", "#98ff00", "#40ff00", "#00ff00", "#00ff98", "#00ffff", "#0060ff"];
const LEVELS = [
  "2.91301e-002", "2.67732e-002", "2.44164e-002", "2.20595e-002", "1.97027e-002", "1.73458e-002",
  "1.49889e-002", "1.26321e-002", "1.02752e-002", "7.91833e-003", "5.56147e-003", "3.20460e-003",
];

const LOG = `*** End Creating Load Combinations for Design/Checking.
*** Start Design by Eurocode2:04.
    Slab Flexural Design :    56. of     56.
*** End Design by Eurocode2:04
    Total Design/Checking Time..:     7.36 [sec]`;

const MenuLabel = ({ text }: { text: string }) => {
  const at = text.indexOf("_");
  return (
    <MenuItem href="#">
      {text.slice(0, at)}
      <Mnemonic>{text[at + 1]}</Mnemonic>
      {text.slice(at + 2)}
    </MenuItem>
  );
};

export default function App() {
  return (
    <Desktop>
      <GlobalStyle />
      <Window>
        <TitleBar>
          <AppIcon size={12} />
          <Title>MIDAS/Gen - [C:₩Example Model-Before Mesh] - [Model View]</Title>
          <CaptionButtons>
            <CaptionButton aria-label="Minimize">
              <svg width="9" height="9"><path d="M1 7h4" stroke="#fff" strokeWidth="2" /></svg>
            </CaptionButton>
            <CaptionButton aria-label="Restore">
              <svg width="9" height="9"><path d="M3.500 3V1.500h5v4H7M1 3.500h5v4H1z" stroke="#fff" fill="none" /></svg>
            </CaptionButton>
            <CaptionButton aria-label="Close" $close>
              <X color="#fff" size={10} />
            </CaptionButton>
          </CaptionButtons>
        </TitleBar>

        <MenuBar>
          <Grip $h={11} />
          <AppIcon />
          <MenuItems>
            {MENUS.map((m) => <MenuLabel key={m} text={m} />)}
          </MenuItems>
          <MdiButtons>
            <PlainButton aria-label="Minimize document"><Tri d="M2 5.500h4v1H2z" color="#222" /></PlainButton>
            <PlainButton aria-label="Restore document"><Tri d="M3 1h4v4H6V3H3zM1 3h4v4H1z" color="#333" /></PlainButton>
            <PlainButton aria-label="Close document"><X color="#8a94a8" /></PlainButton>
          </MdiButtons>
        </MenuBar>

        <RibbonRow>
          <Ribbon $w={234}>
            <Grip $h={27} />
            <RibbonBody>
              <RibbonTabs $pad={2}>
                <RibbonTab $on>Freque...</RibbonTab>
                {["Grid/Snap", "UCS/GCS", "View C...", "Activation"].map((t) => (
                  <RibbonTab key={t}>{t}</RibbonTab>
                ))}
              </RibbonTabs>
              <IconRow>
                <Tools list="tree *line *lineY redBox *redBlob nodeY nodeR nodeF mesh mesh2 screen num num2 book" />
              </IconRow>
            </RibbonBody>
          </Ribbon>
          <Ribbon $w={478}>
            <Grip $h={27} />
            <RibbonBody>
              <RibbonTabs $pad={3}>
                {["Wizard", "Node", "Element", "Property", "BC/Mass", "Stage", "Load", "Building", "Mesh", "Moving", "Result", "Influen...", "Query"].map((t) => (
                  <RibbonTab key={t} $on={t === "Result"}>{t}</RibbonTab>
                ))}
              </RibbonTabs>
              <IconRow>
                <Tools list="beam beam2 | ibeam frame dome | fsup fcont curve fblob slab hook lattice | fsup fcont fblob nodeR coil cube3 | ghost ghost2" />
              </IconRow>
            </RibbonBody>
          </Ribbon>
          <ToolStrip>
            <Grip />
            <Tools list="flashDoc check" />
          </ToolStrip>
        </RibbonRow>

        <ToolRow>
          <ToolStrip $w={171}>
            <Grip />
            <Tools list="blank open save | cut | undo v redo v print preview" />
          </ToolStrip>
          <ToolStrip $w={474}>
            <Grip />
            <Tools list="multi tree | arrowDn selWin selPoly cursor cube cubeB circleCur | prev pen | actWin actPoly walk target | pin" />
            <Select label="Node number" value="" w={86} h={14} flat />
            <Tools list="arrowDn" />
            <Select label="Element number" value="" w={86} h={14} flat />
          </ToolStrip>
          <ToolStrip>
            <Grip />
            <Tools list="bridge lockOpen *lock" />
          </ToolStrip>
        </ToolRow>

        <Main>
          <TreeMenu>
            <PanelHead>
              <HeadTitle>Tree Menu</HeadTitle>
              <PlainButton aria-label="Pin"><Pin /></PlainButton>
              <PlainButton aria-label="Close panel"><X /></PlainButton>
            </PanelHead>
            <DesignTabRow>
              <DesignTab>Design</DesignTab>
            </DesignTabRow>
            <PanelBody>
              <TopRow>
                <Select label="Design type" value="Slab Flexural Design" w={132} />
                <Push type="button" $w={14} $h={15} disabled>...</Push>
              </TopRow>

              <Group $pad="2px 3px 5px 5px">
                <GroupTitle $ml={-2}>Load Cases/Combinations</GroupTitle>
                <Line>
                  <Select label="Load combination" value="ALL COMBINATION" w={119} />
                  <Spring />
                  <Push type="button" $w={14} $h={13}>...</Push>
                </Line>
              </Group>

              <Group $mt={2}>
                <GroupTitle $ml={-3}>
                  <Check label="Flexural Design" on />
                </GroupTitle>
                <Stack>
                  <Box>
                    <Opt name="avg" label="Element" on w={65} />
                    <Opt name="avg" label="Avg. Nodal" />
                  </Box>
                  <Box>
                    <Opt name="cell" label="Element" on w={53} />
                    <Opt name="cell" label="Cell" w={33} />
                    <CellSize aria-label="Cell size" defaultValue="1000" disabled />
                    <Choice as="span" $off>mm</Choice>
                  </Box>
                  <Box>
                    <Opt name="side" label="Top" w={43} />
                    <Opt name="side" label="Bottom" w={49} />
                    <Opt name="side" label="Both" on />
                  </Box>
                  <Group $pad="1px 3px 2px">
                    <GroupTitle $h={10} $ml={1}>Type of Display</GroupTitle>
                    <Line>
                      <Check label="Contour" on w={51} />
                      <Push type="button" $w={12} $h={12}>...</Push>
                      <Spring />
                      <Check label="Legend" on w={49} />
                      <Push type="button" $w={12} $h={12}>...</Push>
                    </Line>
                    <Line>
                      <Check label="Values" w={51} />
                      <Push type="button" $w={12} $h={12}>...</Push>
                    </Line>
                  </Group>
                </Stack>
              </Group>

              <DirBox>
                <Opt name="dir" label="x Dir.(Mxx)" on w={66} />
                <Opt name="dir" label="y Dir.(Myy)" />
              </DirBox>

              <OptionList>
                <Opt name="res" label="Rebar" />
                <Opt name="res" label="As_req (mm^2/m)" />
                <Opt name="res" label="Rho_req" on />
                <Opt name="res" label="Resistance Ratio" />
                <Opt name="res" label="Wood Armer Moment" />
              </OptionList>

              <Group $mt={6} $pad="4px 3px 4px">
                <GroupTitle $ml={-3}>
                  <Check label="One-Way Flexural Design" />
                  <Push type="button" $w={12} $h={12}>...</Push>
                </GroupTitle>
                <Group $pad="0 4px" $off>
                  <GroupTitle $h={10} $ml={-2}>Element Edge</GroupTitle>
                  <Line>
                    <Opt name="edge" label="Both" on off w={46} />
                    <Opt name="edge" label="Left" off w={45} />
                    <Opt name="edge" label="Right" off />
                  </Line>
                </Group>
              </Group>

              <Actions>
                <Push type="button">Design Result</Push>
                <Push type="button">Design Force</Push>
                <Push type="button" $strong>
                  Update Rebar
                  <Focus />
                  <Hourglass width="12" height="15" viewBox="0 0 12 15" aria-hidden="true">
                    <path d="M1.500 1.500h9M1.500 13.500h9M2.500 2v2l3 3.500-3 3.500v2h7v-2l-3-3.500 3-3.500V2z" fill="#fff" stroke="#111" />
                  </Hourglass>
                </Push>
              </Actions>
              <Confirm>
                <Push type="button" $w={44} $strong>Apply</Push>
                <Push type="button" $w={44}>Close</Push>
              </Confirm>
            </PanelBody>
          </TreeMenu>

          <Center>
            <DocTabs>
              <DocControls><Tri d="M5 1v6L2 4z" color="#34569c" /></DocControls>
              <DocTab $w={85} $pad={15} $cut={14}><AppIcon size={12} /><span>Start Page</span></DocTab>
              <DocTab $w={84} $pad={7} $cut={8} $gap={5} $on><AppIcon size={12} /><span>Model View</span></DocTab>
              <DocTab $w={144} $pad={5} $cut={4} $gap={10}><AppIcon size={12} /><span>Meshed Slab Design Force</span></DocTab>
              <Spring />
              <DocControls $end>
                <PlainButton aria-label="Next tab"><Tri d="M2 1v6l3-3z" color="#34569c" /></PlainButton>
                <PlainButton aria-label="Close tab"><X /></PlainButton>
              </DocControls>
            </DocTabs>

            <View>
              <ModelArea>
                <Model />
              </ModelArea>
              <LegendPane>
                <LegendText $center>midas Gen</LegendText>
                <LegendText $center $rule>POST-PROCESSOR</LegendText>
                <LegendText $center $rule $h={13}>SLAB DESIGN</LegendText>
                <Scale>
                  <Swatches>
                    {COLORS.map((c) => <Swatch key={c} $c={c} />)}
                  </Swatches>
                  <Values>
                    {LEVELS.map((v) => <span key={v}>{v}</span>)}
                  </Values>
                </Scale>
                <LegendText $mt={5}>Position:</LegendText>
                <LegendText> Both</LegendText>
                <LegendText $mt={4}>Smoothing:</LegendText>
                <LegendText> Element(Element)</LegendText>
                <LegendText $mt={4}>Component:</LegendText>
                <LegendText> x Dir.(Mxx)</LegendText>
                <LegendText $mt={32} $pb={7} $rule>ALL COMBINATION</LegendText>
                <LegendText>MAX : 290</LegendText>
                <LegendText $rule>MIN : 1024</LegendText>
                <LegendText $h={13}>FILE: EXAMPLE MO-</LegendText>
                <LegendText $h={12}>UNIT: None</LegendText>
                <LegendText $rule $h={12}>DATE: 09/29/2009</LegendText>
                <LegendText $center $h={13}>VIEW-DIRECTION</LegendText>
                <Directions>
                  <div>
                    <LegendText $h={14} $color="#c85050">X: 0.000</LegendText>
                    <LegendText $h={22} $color="#50c860">Y: 0.000</LegendText>
                    <LegendText $h={14} $color="#404090">Z: 1.000</LegendText>
                  </div>
                  <svg width="28" height="36" viewBox="0 0 28 36" aria-hidden="true">
                    <path d="M7 26V10" stroke="#10a060" strokeWidth="2" />
                    <path d="M7 1l4 10H3z" fill="#10b068" />
                    <path d="M9 26h12" stroke="#e01010" strokeWidth="3" />
                    <path d="M27 26l-9-4v8z" fill="#d01010" />
                    <circle cx="7" cy="26" r="4" fill="#1010d0" />
                  </svg>
                </Directions>
              </LegendPane>
            </View>

            <MessageHead>
              <HeadTitle>Message Window</HeadTitle>
              <PlainButton aria-label="Pin messages"><Pin /></PlainButton>
              <PlainButton aria-label="Close messages"><X /></PlainButton>
            </MessageHead>
            <MessageBody>
              <Log>{LOG}</Log>
              <VScroll>
                <ScrollCap aria-label="Scroll up"><svg width="7" height="5"><path d="M1 4l2.500-3L6 4" stroke="#345" strokeWidth="1.500" fill="none" /></svg></ScrollCap>
                <ScrollThumb><Ridges /></ScrollThumb>
                <ScrollCap aria-label="Scroll down"><svg width="7" height="5"><path d="M1 1l2.500 3L6 1" stroke="#345" strokeWidth="1.500" fill="none" /></svg></ScrollCap>
              </VScroll>
            </MessageBody>
            <MessageTabs>
              <TabTray>
                <NavButton aria-label="First"><Tri d="M6 1v6L3 4zM1 1h1v6H1z" /></NavButton>
                <NavButton aria-label="Previous"><Tri d="M6 1v6L3 4z" /></NavButton>
                <NavButton aria-label="Next"><Tri d="M2 1v6l3-3z" /></NavButton>
                <NavButton aria-label="Last"><Tri d="M2 1v6l3-3zM6 1h1v6H6z" /></NavButton>
                <MsgTab $w={92}>Command Message</MsgTab>
                <MsgTab $w={86} $on>Analysis Message</MsgTab>
              </TabTray>
              <NavButton aria-label="Scroll left"><Tri d="M5 1v6L2 4z" color="#111" /></NavButton>
              <NavButton aria-label="Scroll position" />
              <Spring />
              <NavButton aria-label="Scroll right"><Tri d="M3 1v6l3-3z" color="#111" /></NavButton>
            </MessageTabs>
          </Center>

          <Side>
            <SideBar>
              {SIDE.split(" ").map((n, i) =>
                n === "=" ? <Grip key={i} $across /> : n === "|" ? <Divider key={i} $across /> : (
                  <ToolButton key={i} aria-label={n}><Icon name={n} /></ToolButton>
                )
              )}
            </SideBar>
          </Side>
        </Main>

        <StatusBar>
          <StatusCell>For Help, press F1</StatusCell>
          <StatusCell $w={74} $pad={5}>Node-2362</StatusCell>
          <StatusCell $w={115} $pad={2}>U: 2000, 2000, 3000</StatusCell>
          <StatusCell $w={118} $pad={2}>G: 2000, 2000, 3000</StatusCell>
          <Select label="Force unit" value="N" w={35} h={14} />
          <Select label="Length unit" value="mm" w={36} h={14} />
          <StatusTools>
            <StatusButton $w={14} $h={14} aria-label="Settings"><Icon name="gear" size={12} /></StatusButton>
            <StatusButton $w={14} $h={14} aria-label="Shift"><Icon name="shift" size={12} /></StatusButton>
            <StatusButton $w={14} $h={14} aria-label="Play"><Icon name="play" size={12} /></StatusButton>
          </StatusTools>
          <Select label="Filter" value="non" w={34} h={14} />
          <StatusTools>
            <StatusButton $w={14} $h={13} $bg="#dff8ff" aria-label="Help"><Icon name="help" size={10} /></StatusButton>
            <StatusButton $w={14} $h={13} $bg="#00f0ff" aria-label="Colour" />
          </StatusTools>
          <Spin aria-label="Count" disabled defaultValue="" />
          <span>/</span>
          <Spin aria-label="Total" $on defaultValue="2" />
        </StatusBar>
      </Window>
    </Desktop>
  );
}
